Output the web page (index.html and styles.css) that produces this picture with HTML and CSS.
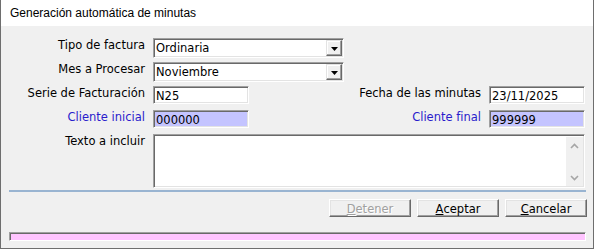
FILE: index.html
```html
<!DOCTYPE html>
<html lang="es">
<head>
<meta charset="utf-8">
<title>Generación automática de minutas</title>
<link rel="stylesheet" href="styles.css">
</head>
<body>
<div class="window">
  <div class="titlebar">Generación automática de minutas</div>
  <div class="content">
    <div class="form">
      <div class="lbl">Tipo de factura</div>
      <div class="combo sunk">
        <span class="combo-text">Ordinaria</span>
        <span class="drop"><svg width="7" height="4" viewBox="0 0 7 4"><polygon points="0,0 7,0 3.5,4" fill="#000"/></svg></span>
      </div>

      <div class="lbl">Mes a Procesar</div>
      <div class="combo sunk">
        <span class="combo-text">Noviembre</span>
        <span class="drop"><svg width="7" height="4" viewBox="0 0 7 4"><polygon points="0,0 7,0 3.5,4" fill="#000"/></svg></span>
      </div>

      <div class="lbl">Serie de Facturación</div>
      <div class="field sunk">N25</div>
      <div class="lbl lbl-right">Fecha de las minutas</div>
      <div class="field field-right sunk">23/11/2025</div>

      <div class="lbl blue">Cliente inicial</div>
      <div class="field sunk lav">000000</div>
      <div class="lbl lbl-right blue">Cliente final</div>
      <div class="field field-right sunk lav">999999</div>

      <div class="lbl">Texto a incluir</div>
      <div class="memo sunk">
        <div class="memo-area"></div>
        <div class="vscroll">
          <span class="sbtn"><svg width="9" height="6" viewBox="0 0 9 6"><polyline points="1,5 4.5,1.5 8,5" fill="none" stroke="#a6a6a6" stroke-width="1.6"/></svg></span>
          <span class="sbtn"><svg width="9" height="6" viewBox="0 0 9 6"><polyline points="1,1 4.5,4.5 8,1" fill="none" stroke="#a6a6a6" stroke-width="1.6"/></svg></span>
        </div>
      </div>
    </div>

    <div class="sep"></div>

    <div class="buttons">
      <div class="btn disabled"><u>D</u>etener</div>
      <div class="btn"><u>A</u>ceptar</div>
      <div class="btn"><u>C</u>ancelar</div>
    </div>

    <div class="progress"></div>
  </div>
</div>
</body>
</html>
```

FILE: styles.css
```css
* { box-sizing: border-box; }

html, body {
  margin: 0;
  padding: 0;
}

body {
  width: 594px;
  height: 249px;
  overflow: hidden;
  background: #f0f0f0;
  font-family: "DejaVu Sans", Verdana, sans-serif;
  font-size: 11.5px;
  color: #000;
}

.window {
  width: 594px;
  height: 249px;
  border: 1px solid #6e6e6e;
  border-top: 0;
  background: #f0f0f0;
  display: flex;
  flex-direction: column;
}

.titlebar {
  height: 26px;
  flex: none;
  background: #fff;
  font-family: "Liberation Sans", Arial, sans-serif;
  font-size: 12px;
  line-height: 14px;
  padding: 6px 0 0 9px;
  white-space: nowrap;
}

.content {
  flex: 1;
  display: flex;
  flex-direction: column;
  padding-top: 12px;
}

.form {
  display: grid;
  grid-template-columns: 144px 96px 1fr 96px;
  grid-template-rows: 24px 24px 24px 24px 54px;
  column-gap: 8px;
  padding-right: 8px;
}

.lbl {
  grid-column: 1;
  justify-self: end;
  align-self: start;
  margin-top: 1px;
  line-height: 13px;
  white-space: nowrap;
}

.lbl-right {
  grid-column: 3;
}

.blue {
  color: #2a1ccc;
}

.sunk {
  border: 1px solid;
  border-color: #a0a0a0 #ffffff #ffffff #a0a0a0;
  box-shadow: inset 1px 1px #696969, inset -1px -1px #e3e3e3;
  background: #fff;
}

.lav {
  background: #c4c4ff;
}

.field {
  grid-column: 2;
  align-self: start;
  height: 18px;
  padding: 3px 0 0 2px;
  line-height: 13px;
  white-space: nowrap;
}

.field-right {
  grid-column: 4;
}

.combo {
  grid-column: 2 / 4;
  justify-self: start;
  align-self: start;
  width: 191px;
  height: 20px;
  padding: 1px;
  display: flex;
}

.combo-text {
  flex: 1;
  padding: 2px 0 0 1px;
  line-height: 13px;
}

.drop {
  width: 16px;
  height: 16px;
  flex: none;
  background: #f0f0f0;
  border: 1px solid;
  border-color: #e3e3e3 #696969 #696969 #e3e3e3;
  box-shadow: inset -1px -1px #a0a0a0, inset 1px 1px #fff;
  display: flex;
  align-items: center;
  justify-content: center;
  padding-top: 1px;
}

.drop svg {
  display: block;
}

.memo {
  grid-column: 2 / 5;
  height: 54px;
  padding: 1px;
  display: flex;
}

.memo-area {
  flex: 1;
  margin: 1px 0 0 1px;
  background: #fff;
}

.vscroll {
  width: 17px;
  flex: none;
  margin-top: 1px;
  background: #f0f0f0;
  display: flex;
  flex-direction: column;
  justify-content: space-between;
}

.sbtn {
  height: 17px;
  display: flex;
  align-items: center;
  justify-content: center;
}

.sbtn svg {
  display: block;
}

.sep {
  height: 2px;
  margin: 2px 7px 0 8px;
  background: #99b4d1;
}

.buttons {
  display: flex;
  justify-content: flex-end;
  gap: 6px;
  margin-top: 7px;
  padding-right: 6px;
}

.btn {
  width: 82px;
  height: 18px;
  border: 1px solid;
  border-color: #ffffff #696969 #696969 #ffffff;
  box-shadow: inset -1px -1px #a0a0a0, inset 1px 1px #e3e3e3;
  background: #f0f0f0;
  display: flex;
  align-items: center;
  justify-content: center;
  padding-top: 2px;
  line-height: 13px;
  white-space: nowrap;
}

.btn u {
  text-decoration: underline;
}

.btn.disabled {
  color: #a0a0a0;
  text-shadow: 1px 1px 0 #ffffff;
}

.progress {
  height: 9px;
  margin: 15px 7px 0 8px;
  border: 1px solid;
  border-color: #a0a0a0 #ffffff #ffffff #a0a0a0;
  box-shadow: inset 1px 1px #696969;
  background: #ffc4ff;
}
```
